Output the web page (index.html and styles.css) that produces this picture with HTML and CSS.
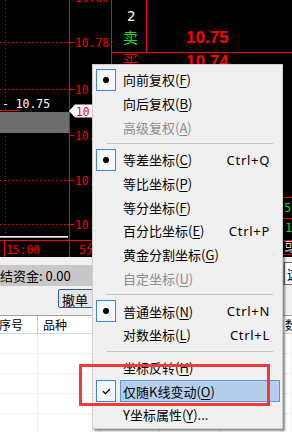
FILE: index.html
```html
<!DOCTYPE html>
<html lang="zh-CN">
<head>
  <meta charset="UTF-8">
  <title>K线图 右键菜单</title>
  <link rel="stylesheet" href="styles.css">
</head>
<body>
<div class="screen">

  <!-- 行情图 -->
  <div class="chart">
    <svg width="292" height="257" viewBox="0 0 292 257">
      <rect width="292" height="257" fill="#000"/>
      <g class="dot-line">
        <line x1="0" y1="42.5" x2="69" y2="42.5"/>
        <line x1="0" y1="89.5" x2="69" y2="89.5"/>
        <line x1="0" y1="180.5" x2="69" y2="180.5"/>
        <line x1="0" y1="224.5" x2="69" y2="224.5"/>
        <line x1="5.5" y1="0" x2="5.5" y2="236"/>
      </g>
      <g class="red-line">
        <line x1="69.5" y1="0" x2="69.5" y2="257"/>
        <line x1="111.5" y1="0" x2="111.5" y2="240"/>
        <line x1="146.5" y1="0" x2="146.5" y2="52"/>
        <line x1="111" y1="52.5" x2="292" y2="52.5"/>
        <line x1="111" y1="197.5" x2="292" y2="197.5"/>
        <line x1="111" y1="218.5" x2="292" y2="218.5"/>
        <line x1="111" y1="254.5" x2="292" y2="254.5"/>
        <line x1="0" y1="240.5" x2="292" y2="240.5"/>
        <line x1="4.5" y1="241" x2="4.5" y2="257"/>
        <line x1="0" y1="110.5" x2="20" y2="110.5"/>
        <path d="M69 42.5h5M69 89.5h5M69 135.5h5M69 180.5h5M69 224.5h5"/>
      </g>

      <rect x="0" y="112" width="69" height="21" fill="#6e6e6e"/>
      <text class="mono white" x="2" y="108" textLength="48" lengthAdjust="spacingAndGlyphs">- 10.75</text>

      <text class="mono red" x="75" y="1.5" textLength="34" lengthAdjust="spacingAndGlyphs">10.80</text>
      <text class="mono red" x="75" y="47" textLength="34" lengthAdjust="spacingAndGlyphs">10.78</text>
      <text class="mono red" x="75" y="93.5" textLength="34" lengthAdjust="spacingAndGlyphs">10.76</text>
      <text class="mono red" x="75" y="139.5" textLength="34" lengthAdjust="spacingAndGlyphs">10.74</text>
      <text class="mono red" x="75" y="184.5" textLength="34" lengthAdjust="spacingAndGlyphs">10.72</text>
      <text class="mono red" x="75" y="228.5" textLength="34" lengthAdjust="spacingAndGlyphs">10.70</text>

      <polygon points="69,111 75,104.5 112,104.5 112,117.5 75,117.5" fill="#fff"/>
      <text class="mono red" x="76" y="115.5" textLength="34" lengthAdjust="spacingAndGlyphs">10.75</text>

      <rect x="0" y="236" width="68" height="1" fill="#f4f4f4"/>
      <rect x="0" y="237" width="68" height="1" fill="#9a9a9a"/>
      <text class="mono red" x="6" y="253.5" textLength="34" lengthAdjust="spacingAndGlyphs">15:00</text>
      <text class="mono red" x="79" y="253.5">5分</text>

      <!-- 盘口 -->
      <text class="mono white big" x="127" y="20.5">2</text>
      <text class="cjk green" x="123" y="42.7">卖</text>
      <text class="cjk red" x="123" y="65.7">买</text>
      <text class="quote" x="186" y="43.3">10.75</text>
      <text class="quote" x="186" y="66.5">10.74</text>

      <text class="mono green" x="284" y="212">52</text>
      <text class="mono green" x="285" y="232">1</text>
      <text class="cjk gray" x="284" y="251">或</text>
    </svg>
  </div>

  <!-- 资金栏 -->
  <div class="fund-area">
    <div class="fund"><span>冻结资金: 0.00</span></div>
    <button class="side-btn">这里</button>
  </div>

  <div class="toolbar">
    <button class="btn">撤单</button>
  </div>

  <!-- 委托列表 -->
  <div class="orders">
    <div class="row head">
      <span class="first">序号</span><span>品种</span><span></span><span></span><span></span><span>数量</span>
    </div>
    <div class="row"><span></span><span></span><span></span><span></span><span></span><span></span></div>
    <div class="row"><span></span><span></span><span></span><span></span><span></span><span></span></div>
    <div class="row"><span></span><span></span><span></span><span></span><span></span><span></span></div>
    <div class="row"><span></span><span></span><span></span><span></span><span></span><span></span></div>
    <div class="row"><span></span><span></span><span></span><span></span><span></span><span></span></div>
  </div>

  <!-- 右键菜单 -->
  <div class="menu">
    <div class="item on"><span class="check"><i class="dot"></i></span><span class="label"><span>向前复权(<u>F</u>)</span></span></div>
    <div class="item"><span class="check"></span><span class="label"><span>向后复权(<u>B</u>)</span></span></div>
    <div class="item off"><span class="check"></span><span class="label"><span>高级复权(<u>A</u>)</span></span></div>
    <div class="sep"></div>
    <div class="item on"><span class="check"><i class="dot"></i></span><span class="label"><span>等差坐标(<u>C</u>)</span><span class="key">Ctrl+Q</span></span></div>
    <div class="item"><span class="check"></span><span class="label"><span>等比坐标(<u>P</u>)</span></span></div>
    <div class="item"><span class="check"></span><span class="label"><span>等分坐标(<u>F</u>)</span></span></div>
    <div class="item"><span class="check"></span><span class="label"><span>百分比坐标(<u>E</u>)</span><span class="key">Ctrl+P</span></span></div>
    <div class="item"><span class="check"></span><span class="label"><span>黄金分割坐标(<u>G</u>)</span></span></div>
    <div class="item off"><span class="check"></span><span class="label"><span>自定坐标(<u>U</u>)</span></span></div>
    <div class="sep"></div>
    <div class="item on"><span class="check"><i class="dot"></i></span><span class="label"><span>普通坐标(<u>N</u>)</span><span class="key">Ctrl+N</span></span></div>
    <div class="item"><span class="check"></span><span class="label"><span>对数坐标(<u>L</u>)</span><span class="key">Ctrl+L</span></span></div>
    <div class="sep"></div>
    <div class="item"><span class="check"></span><span class="label"><span>坐标反转(<u>H</u>)</span></span></div>
    <div class="item on hot"><span class="check"><svg width="9" height="7" viewBox="0 0 9 7"><path d="M1 3.2 L3.4 5.6 L8 1" fill="none" stroke="#000" stroke-width="1.3"/></svg></span><span class="label"><span>仅随K线变动(<u>O</u>)</span></span></div>
    <div class="item"><span class="check"></span><span class="label"><span>Y坐标属性(<u>Y</u>)...</span></span></div>
  </div>

  <!-- 标注框 -->
  <div class="mark"></div>
</div>
</body>
</html>
```

FILE: styles.css
```css
* {
  box-sizing: border-box;
}

body {
  margin: 0;
  font-family: "Noto Sans CJK SC", sans-serif;
  font-size: 13px;
  color: #000;
  background: #f0f0f0;
}

.screen {
  position: relative;
  width: 292px;
  height: 432px;
  overflow: hidden;
}

/* ---- chart ---- */
.chart svg {
  display: block;
}
.dot-line line {
  stroke: #f00;
  stroke-dasharray: 1 3;
  shape-rendering: crispEdges;
}
.red-line line,
.red-line path {
  stroke: #f00;
  stroke-width: 1;
  shape-rendering: crispEdges;
}
.mono {
  font-family: "DejaVu Sans Mono", monospace;
  font-size: 12px;
}
.big {
  font-size: 14px;
}
.cjk {
  font-family: "Noto Sans CJK SC", sans-serif;
  font-size: 15px;
}
.quote {
  font-family: "Liberation Sans", Arial, sans-serif;
  font-weight: bold;
  font-size: 17px;
  fill: #f00;
}
.red { fill: #f00; }
.white { fill: #fff; }
.green { fill: #22dd22; }
.gray { fill: #c8c8c8; }

/* ---- fund bar ---- */
.fund-area {
  display: flex;
  height: 31px;
  padding-top: 8px;
}
.fund {
  flex: none;
  width: 284px;
  height: 21px;
  line-height: 21px;
  background: #c8c8c8;
  white-space: nowrap;
  overflow: hidden;
}
.fund span {
  margin-left: -13px;
}
.side-btn {
  flex: none;
  width: 40px;
  height: 23px;
  margin-top: -3px;
  padding: 0 0 0 2px;
  text-align: left;
  font: 13px "Noto Sans CJK SC", sans-serif;
  background: #fdfdfd;
  border: 1px solid #6a6a6a;
}

/* ---- toolbar ---- */
.toolbar {
  height: 27px;
  padding: 1px 0 0 58px;
}
.btn {
  width: 46px;
  height: 19px;
  padding: 0 0 0 3px;
  text-align: left;
  line-height: 17px;
  font: 13px "Noto Sans CJK SC", sans-serif;
  background: #e5e5e5;
  border: 1px solid #2c5d9a;
  border-radius: 2px;
}

/* ---- orders table ---- */
.orders {
  border-top: 1px solid #a0a0a0;
  background: #fff;
}
.row {
  display: grid;
  grid-template-columns: 38px 62px 60px 60px 63px 1fr;
  height: 20px;
}
.row span {
  border-right: 1px solid #eeeeee;
  border-bottom: 1px solid #eeeeee;
}
.head {
  height: 18px;
  font-size: 12px;
  line-height: 17px;
  border-bottom: 1px solid #d8d8d8;
}
.head span {
  padding-left: 5px;
  border-bottom: none;
  border-right-color: #c8c8c8;
  white-space: nowrap;
}
.head span.first {
  padding-left: 0;
  text-indent: -1px;
}
.head span:last-child {
  padding-left: 2px;
}

/* ---- context menu ---- */
.menu {
  position: absolute;
  left: 92px;
  top: 64px;
  width: 191px;
  padding: 3px 0 1px;
  background: #f0f0f0;
  border: 1px solid #cdcdcd;
  box-shadow: 2px 2px 2px rgba(0, 0, 0, 0.45);
}
.item {
  display: flex;
  align-items: center;
  height: 23.7px;
  padding: 0 2px 0 3px;
}
.check {
  flex: none;
  display: flex;
  align-items: center;
  justify-content: center;
  width: 20px;
  height: 22px;
  margin-right: 4px;
  border: 1px solid transparent;
}
.on .check {
  border-color: #3d86d8;
  background: #f5f7fa;
}
.dot {
  width: 6px;
  height: 6px;
  border-radius: 50%;
  background: #000;
}
.label {
  flex: 1;
  display: flex;
  align-items: center;
  justify-content: space-between;
  height: 22px;
  padding: 0 9px 0 2px;
  border: 1px solid transparent;
  white-space: nowrap;
}
.hot .label {
  background: #b4cfeb;
  border-color: #5699dc;
}
.off {
  color: #8c8c8c;
}
.key {
  font-family: "Noto Sans", sans-serif;
  letter-spacing: 0.7px;
}
u {
  text-underline-offset: 2px;
}
.sep {
  display: flex;
  align-items: center;
  height: 9px;
  padding: 0 9px 0 13px;
}
.sep::before {
  content: "";
  flex: 1;
  border-top: 1px solid #c5c5c5;
}

/* ---- red annotation ---- */
.mark {
  position: absolute;
  left: 79px;
  top: 364px;
  width: 191px;
  height: 42px;
  border: 3px solid #f03a3a;
}
```
